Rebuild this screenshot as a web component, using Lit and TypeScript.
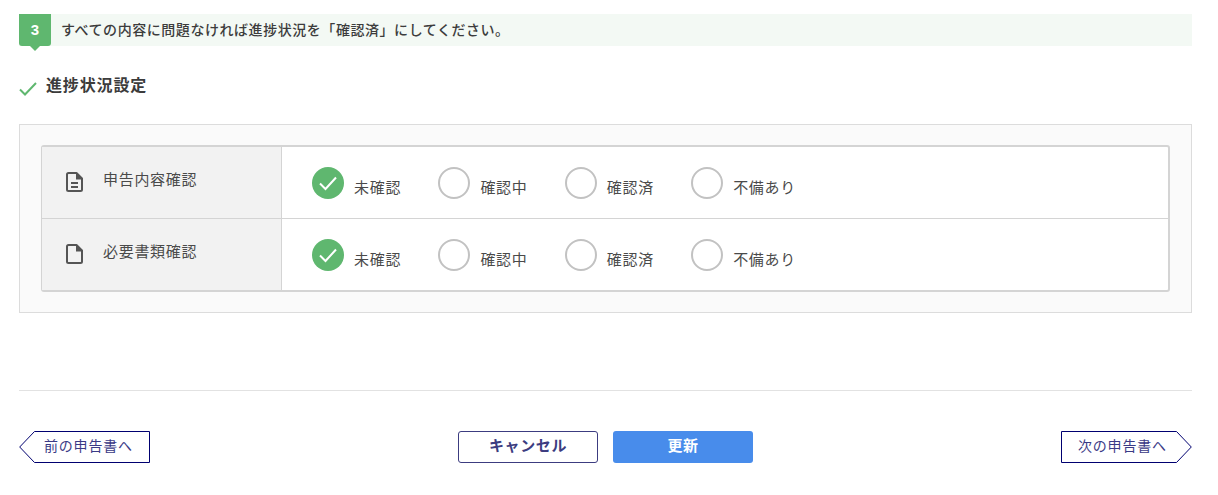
import { LitElement, html, css, svg } from "lit";
import { customElement } from "lit/decorators.js";

const OPTIONS = ["未確認", "確認中", "確認済", "不備あり"];

@customElement("app-root")
export class AppRoot extends LitElement {
  static styles = css`
    :host {
      display: block;
      box-sizing: border-box;
      width: 1218px;
      height: 495px;
      padding: 14px 26px 0 19px;
      background: #fff;
      font-family: "Noto Sans CJK JP", "Noto Sans", sans-serif;
      color: #444;
      overflow: hidden;
    }
    * { box-sizing: border-box; }
    .step {
      display: flex;
      align-items: flex-start;
      height: 32px;
      background: #f3f9f4;
    }
    .badge {
      position: relative;
      width: 32px;
      height: 32px;
      flex: none;
      display: flex;
      align-items: center;
      justify-content: center;
      padding-bottom: 1px;
      background: #5fb76f;
      border-radius: 0 0 3px 3px;
      color: #fff;
      font-family: "Liberation Sans", sans-serif;
      font-weight: 700;
      font-size: 15px;
    }
    .badge::after {
      content: "";
      position: absolute;
      left: 11px;
      top: 32px;
      border-left: 5px solid transparent;
      border-right: 5px solid transparent;
      border-top: 5px solid #5fb76f;
    }
    .step-text {
      margin-left: 10px;
      font-size: 14px;
      font-weight: 500;
      letter-spacing: 0.55px;
      line-height: 30px;
      color: #3c3c3c;
    }
    .heading {
      display: flex;
      align-items: center;
      gap: 9px;
      height: 24px;
      margin-top: 28px;
    }
    .heading svg { display: block; flex: none; margin-top: 6px; }
    .heading span {
      font-size: 16px;
      font-weight: 700;
      letter-spacing: 0.85px;
      margin-bottom: 4px;
      color: #3c3c3c;
    }
    .panel {
      margin-top: 26px;
      height: 189px;
      padding: 20px 21px 0;
      border: 1px solid #dcdcdc;
      background: #fafafa;
    }
    .table {
      height: 147px;
      border-style: solid;
      border-color: #d4d4d4;
      border-width: 2px 2px 2px 1px;
      border-radius: 3px;
      background: #fff;
    }
    .row { display: flex; height: 71px; }
    .row + .row { border-top: 1px solid #d4d4d4; height: 72px; }
    .label {
      flex: none;
      width: 240px;
      display: flex;
      align-items: center;
      padding: 0 0 9px 24px;
      gap: 20px;
      background: #f2f2f2;
      border-right: 1px solid #d4d4d4;
      font-size: 15px;
      letter-spacing: 0.7px;
      color: #4a4a4a;
    }
    .label svg { display: block; flex: none; margin-top: 8px; }
    .opts {
      display: flex;
      align-items: flex-start;
      padding: 20px 0 0 30px;
    }
    .opt {
      display: flex;
      align-items: flex-start;
      width: 126.4px;
      font-size: 15px;
      letter-spacing: 0.7px;
      color: #4a4a4a;
    }
    .opt svg { display: block; flex: none; }
    .opt span { margin: 8px 0 0 10px; line-height: 24px; }
    .rule {
      margin-top: 77px;
      border-top: 1px solid #e2e2e2;
    }
    .actions {
      display: flex;
      align-items: center;
      justify-content: space-between;
      margin-top: 40px;
      height: 32px;
    }
    .center { display: flex; gap: 15px; }
    .btn {
      width: 140px;
      height: 32px;
      border-radius: 3px;
      display: flex;
      align-items: center;
      justify-content: center;
      font-size: 15px;
      font-weight: 700;
      letter-spacing: 0.6px;
      font-family: inherit;
      padding: 0 0 5px;
    }
    .cancel { background: #fff; border: 1px solid #3c3c80; color: #3c3c80; }
    .update { background: #488ceb; border: 0; color: #fff; }
    .nav {
      position: relative;
      width: 131px;
      height: 32px;
      display: flex;
      align-items: center;
      background: none;
      border: 0;
      padding: 0 0 4px;
      font-family: inherit;
      font-size: 14px;
      letter-spacing: 0.8px;
      color: #3a3a86;
    }
    .nav svg { position: absolute; left: 0; top: 0; }
    .nav span { position: relative; }
    .prev span { margin-left: 25px; }
    .next span { margin-left: 17px; }
  `;

  private radio(checked: boolean) {
    return checked
      ? html`<svg width="32" height="32" viewBox="0 0 32 32"><circle cx="16" cy="16" r="16" fill="#5fb76f"/><path d="M8 16.5l5.5 5.5L24 10.5" fill="none" stroke="#fff" stroke-width="2"/></svg>`
      : html`<svg width="32" height="32" viewBox="0 0 32 32"><circle cx="16" cy="16" r="15" fill="#fff" stroke="#c2c2c2" stroke-width="2"/></svg>`;
  }

  private row(label: string, icon: unknown) {
    return html`<div class="row">
      <div class="label">${icon}<span>${label}</span></div>
      <div class="opts">
        ${OPTIONS.map(
          (o, i) => html`<div class="opt">${this.radio(i === 0)}<span>${o}</span></div>`
        )}
      </div>
    </div>`;
  }

  render() {
    const docLines = svg`<path d="M3 1h7.5L16 6.5V17.5a1.5 1.5 0 0 1-1.5 1.5H2.5A1.5 1.5 0 0 1 1 17.5V2.5A1.5 1.5 0 0 1 2.5 1z" fill="none" stroke="#555" stroke-width="2" stroke-linejoin="round"/><path d="M10 1v6.5h6.5z" fill="#555"/>`;
    const doc = html`<svg width="17" height="20" viewBox="0 0 17 20">${docLines}<path d="M5 11h7M5 15h7" stroke="#555" stroke-width="2"/></svg>`;
    const blank = html`<svg width="17" height="20" viewBox="0 0 17 20">${docLines}</svg>`;
    return html`
      <div class="step">
        <div class="badge">3</div>
        <div class="step-text">すべての内容に問題なければ進捗状況を「確認済」にしてください。</div>
      </div>
      <div class="heading">
        <svg width="18" height="14" viewBox="0 0 18 14"><path d="M1 7.5l5 5L17 1" fill="none" stroke="#5fb76f" stroke-width="2"/></svg>
        <span>進捗状況設定</span>
      </div>
      <div class="panel">
        <div class="table">
          ${this.row("申告内容確認", doc)}
          ${this.row("必要書類確認", blank)}
        </div>
      </div>
      <div class="rule"></div>
      <div class="actions">
        <button class="nav prev">
          <svg width="131" height="32" viewBox="0 0 131 32"><path d="M15.5 .5H130.5V31.5H15.5L.7 16z" fill="#fff" stroke="#000070"/></svg>
          <span>前の申告書へ</span>
        </button>
        <div class="center">
          <button class="btn cancel">キャンセル</button>
          <button class="btn update">更新</button>
        </div>
        <button class="nav next">
          <svg width="131" height="32" viewBox="0 0 131 32"><path d="M.5 .5H115.5L130.3 16L115.5 31.5H.5z" fill="#fff" stroke="#000070"/></svg>
          <span>次の申告書へ</span>
        </button>
      </div>
    `;
  }
}
